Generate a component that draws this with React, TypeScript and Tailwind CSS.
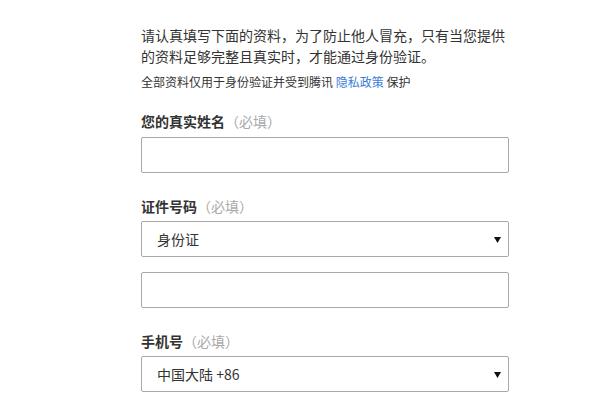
import { useState } from "react";

const font = { fontFamily: '"Noto Sans CJK SC", "Noto Sans", sans-serif' };

const Label = ({ text }: { text: string }) => (
  <div className="text-[14px] leading-[20px] font-bold text-[#333]">
    {text}
    <span className="font-normal text-[#aaa]">（必填）</span>
  </div>
);

const Select = ({ value, options, onChange }: { value: string; options: string[]; onChange: (v: string) => void }) => (
  <div className="relative">
    <select
      value={value}
      onChange={(e) => onChange(e.target.value)}
      className="block w-full h-[36px] appearance-none rounded-[2px] border border-[#a9a9a9] bg-white pl-[15px] pr-8 text-[14px] text-[#333] outline-none"
      style={font}
    >
      {options.map((o) => (
        <option key={o}>{o}</option>
      ))}
    </select>
    <svg className="pointer-events-none absolute right-[8px] top-[16px]" width="7" height="6" viewBox="0 0 7 6">
      <path d="M0 0H7L3.5 6Z" fill="#111" />
    </svg>
  </div>
);

export default function App() {
  const [idType, setIdType] = useState("身份证");
  const [region, setRegion] = useState("中国大陆 +86");

  return (
    <div className="min-h-[400px] bg-white pl-[141px] pt-[25px] [text-spacing-trim:space-all]" style={font}>
      <div className="w-[368px]">
        <p className="text-[14px] leading-[21px] text-[#333]">
          请认真填写下面的资料，为了防止他人冒充，只有当您提供的资料足够完整且真实时，才能通过身份验证。
        </p>
        <p className="mt-[6px] text-[12px] leading-[18px] text-[#333]">
          全部资料仅用于身份验证并受到腾讯 <a className="text-[#3b7dd8]">隐私政策</a> 保护
        </p>

        <div className="mt-[20px]">
          <Label text="您的真实姓名" />
          <input className="mt-[6px] block w-full h-[36px] rounded-[2px] border border-[#a9a9a9] px-[15px] text-[14px] outline-none" />
        </div>

        <div className="mt-[23px]">
          <Label text="证件号码" />
          <div className="mt-[5px]">
            <Select value={idType} options={["身份证", "护照", "港澳通行证"]} onChange={setIdType} />
          </div>
          <input className="mt-[15px] block w-full h-[36px] rounded-[2px] border border-[#a9a9a9] px-[15px] text-[14px] outline-none" />
        </div>

        <div className="mt-[23px]">
          <Label text="手机号" />
          <div className="mt-[5px]">
            <Select value={region} options={["中国大陆 +86", "中国香港 +852", "中国台湾 +886"]} onChange={setRegion} />
          </div>
        </div>
      </div>
    </div>
  );
}
